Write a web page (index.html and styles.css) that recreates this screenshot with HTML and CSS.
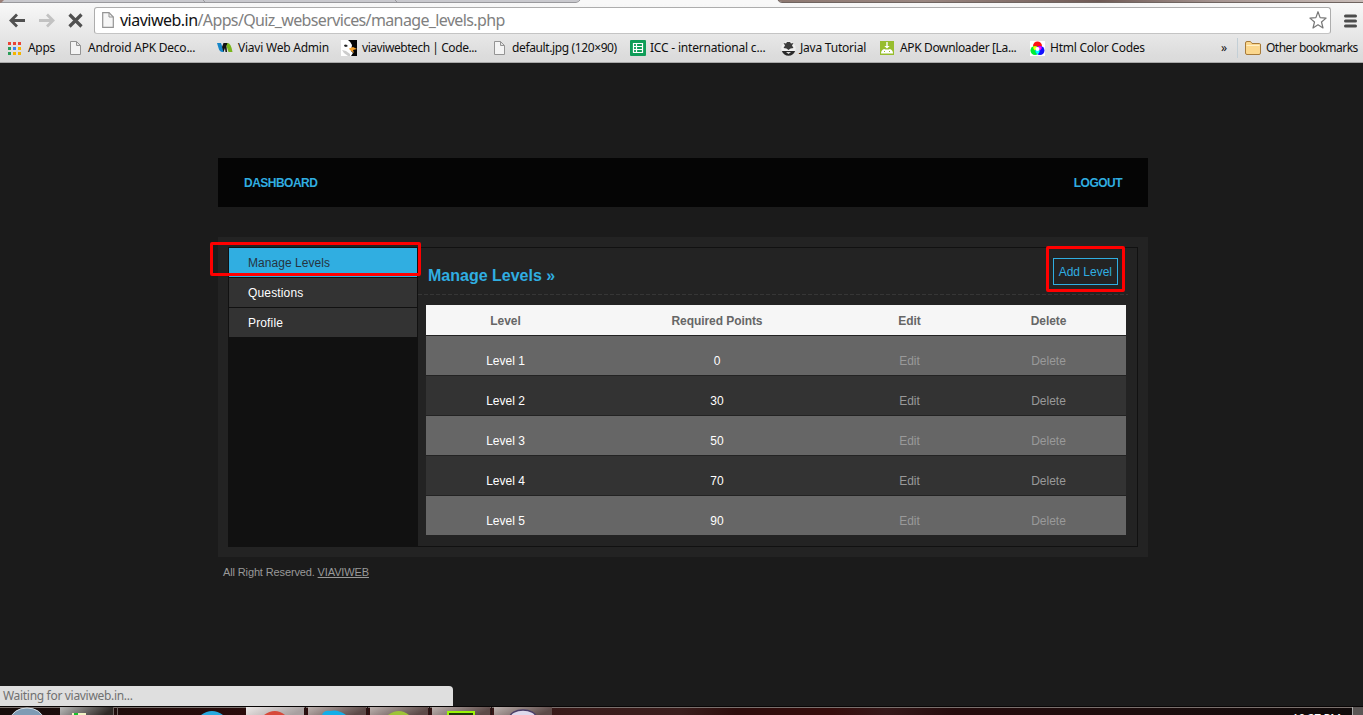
FILE: index.html
```html
<!DOCTYPE html>
<html lang="en">
<head>
<meta charset="utf-8">
<title>Manage Levels</title>
<link rel="stylesheet" href="styles.css">
</head>
<body>
<div class="screen">
  <header class="chrome">
    <svg class="tabs" width="1363" height="4" viewBox="0 0 1363 4">
      <defs><linearGradient id="glass"><stop offset="0" stop-color="#8d7871"/><stop offset=".25" stop-color="#998680"/><stop offset=".55" stop-color="#6f5a55"/><stop offset=".75" stop-color="#a59490"/><stop offset="1" stop-color="#c9bdb9"/></linearGradient></defs>
      <rect width="1363" height="4" fill="#f8f8f8"/>
      <path d="M0 0H580Q579 2 576 2H0Z" fill="#c9c9ce"/><path d="M0 2.5H576Q579 2 580 0M203 0l2 2M395 0l2 2" fill="none" stroke="#99999d"/>
      <path d="M778 0H1363V2H782Q779 2 778 0Z" fill="url(#glass)"/><path d="M778 0Q779 2.500 782 2.500H1363" fill="none" stroke="#6f6460"/>
      <path d="M0 0H4L1 3H0Z" fill="#9b8079"/>
    </svg>
    <div class="toolbar">
      <svg class="nav" width="94" height="28" viewBox="0 0 94 28">
        <g fill="none" stroke-width="2.8">
          <path d="M25 13.500H12M17 7.500l-6 6 6 6" stroke="#505050"/>
          <path d="M39 13.500H52M47 7.500l6 6-6 6" stroke="#c2c2c2"/>
          <path d="M69.500 7.500l12 12M81.500 7.500l-12 12" stroke="#505050" stroke-width="3.200"/>
        </g>
      </svg>
      <div class="address">
        <svg width="12" height="16" viewBox="0 0 12 16"><path d="M.7.700H7L11.300 5V15.300H.7Z" fill="#f6f6f6" stroke="#949494" stroke-width="1.200"/><path d="M7 .700V5h4.300" fill="none" stroke="#949494"/></svg>
        <span class="url"><b>viaviweb.in</b>/Apps/Quiz_webservices/manage_levels.php</span>
        <svg width="20" height="20" viewBox="0 0 20 20"><path d="M10 1.700l2.100 5.900 6 .5-4.600 3.900 1.500 6L10 14.800l-5 3.200 1.500-6-4.600-3.900 6-.5Z" fill="#fff" stroke="#777" stroke-width="1.200" stroke-linejoin="round"/></svg>
      </div>
      <svg class="menu" width="13" height="14" viewBox="0 0 13 14"><path d="M1.500 2h10M1.500 7h10M1.500 12h10" stroke="#4c4c4c" stroke-width="3" stroke-linecap="round"/></svg>
    </div>
    <nav class="bookmarks">
      <a class="bm apps"><svg width="13" height="13" viewBox="0 0 13 13"><path d="M0 0h3v3H0zM5 0h3v3H5zM10 0h3v3h-3z" fill="#ea4335"/><path d="M0 5h3v3H0zM0 10h3v3H0z" fill="#2b9d58"/><path d="M5 5h3v3H5z" fill="#3b82ee"/><path d="M10 5h3v3h-3zM5 10h3v3H5zM10 10h3v3h-3z" fill="#f4b400"/></svg><span>Apps</span></a>
      <a class="bm deco"><svg width="11" height="14" viewBox="0 0 11 14"><path d="M.5.500H6.500L10.500 4.500V13.500H.5ZM6.500.500V4.500H10.500" fill="#f4f4f4" stroke="#949494"/></svg><span>Android APK Deco...</span></a>
      <a class="bm viavi"><svg width="16" height="10" viewBox="0 0 16 10"><path d="M0 0h4l3 9H5.500Q2.500 9 1.500 5Z" fill="#1686c8"/><path d="M5 4L6.500 0H11L9.500 3 10 9H8.500L8 5 6.500 9Z" fill="#111"/><path d="M10.500 0q3.500 0 5 9h-4L9.500 3Z" fill="#79b51c"/></svg><span>Viavi Web Admin</span></a>
      <a class="bm tech"><svg width="16" height="16" viewBox="0 0 16 16"><rect width="16" height="16" fill="#fff"/><path d="M7 0h9v16h-6l2-3-2-2 1-6Q10 2 7 0Z" fill="#050505"/><path d="M3 5l2-.500 2 1.500-2 1-1.500-.500Z" fill="#222"/><path d="M1 10l4 1 4 3v2H7L3 13Z" fill="#ccc"/><path d="M8 8.500l4-1.500 4 2-4 1 1 3-4-3Z" fill="#f5a02a"/></svg><span>viaviwebtech | Code...</span></a>
      <a class="bm jpg"><svg width="11" height="14" viewBox="0 0 11 14"><path d="M.5.500H6.500L10.500 4.500V13.500H.5ZM6.500.500V4.500H10.500" fill="#f4f4f4" stroke="#949494"/></svg><span>default.jpg (120×90)</span></a>
      <a class="bm icc"><svg width="16" height="16" viewBox="0 0 16 16"><rect width="16" height="16" rx="1" fill="#0f9d58"/><path d="M3.500 3.500h9v9h-9zM3.500 6.500h9M3.500 9.500h9M6.500 3.500v9" fill="none" stroke="#fff" stroke-width="1.200"/></svg><span>ICC - international c...</span></a>
      <a class="bm java"><svg width="15" height="15" viewBox="0 0 15 15"><circle cx="7.500" cy="7.500" r="7.200" fill="#f1f1f1"/><path d="M.8 10h13.400q-2 4.800-6.700 4.800T.8 10Z" fill="#292929"/><path d="M6 1h3l1 1.500 2.500-.500L11 4.500 12.500 7l-3 .500L7.500 9l-2-1.500-3-.500L4 4.500 2.500 2 5 2.500Z" fill="#3c3c3c"/><path d="M5 11h5l-2.500 2Z" fill="#ddd"/></svg><span>Java Tutorial</span></a>
      <a class="bm apk"><svg width="14" height="14" viewBox="0 0 14 14"><rect width="14" height="14" fill="#97bd2e"/><path d="M6.300 1h1.400v4h2L7 7.500 4.300 5h2ZM1 12.500q0-3.500 3-4.500l1.500.500h3L10 8q3 1 3 4.500Z" fill="#fff"/><path d="M4 10.500h1M9 10.500h1" stroke="#97bd2e"/></svg><span>APK Downloader [La...</span></a>
      <a class="bm color"><svg width="15" height="15" viewBox="0 0 15 15"><rect width="15" height="15" fill="#fff"/><circle cx="7.500" cy="5" r="4.500" fill="#f11"/><circle cx="5" cy="9.500" r="4.500" fill="#0e3"/><circle cx="10" cy="9.500" r="4.500" fill="#11f"/><path d="M3.200 5.600Q6 4.500 7.500 6L5 9.400Q3 8.500 3.200 5.600Z" fill="#ff0"/><path d="M11.800 5.600Q9 4.500 7.500 6l2.500 3.400q2-.9 1.800-3.800Z" fill="#f0f"/><path d="M5.500 9h4q.5 3-2 4.300Q5 12 5.500 9Z" fill="#0ff"/><circle cx="7.500" cy="8" r="2" fill="#fff"/></svg><span>Html Color Codes</span></a>
      <a class="bm more"><span>»</span></a>
      <a class="bm other"><svg width="16" height="14" viewBox="0 0 16 14"><path d="M.5 12V2Q.5.500 2 .500H5.500L7 2.500H14.500Q15.500 2.500 15.500 4V12Q15.500 13.500 14 13.500H2Q.5 13.500.5 12Z" fill="#fbd78d" stroke="#a77b3a"/><path d="M1.500 4.500h13" stroke="#fff0c8"/></svg><span>Other bookmarks</span></a>
    </nav>
  </header>

  <main class="page">
    <div class="topnav"><a>DASHBOARD</a><a>LOGOUT</a></div>
    <div class="panel">
      <div class="inner">
        <ul class="side"><li class="active">Manage Levels</li><li>Questions</li><li>Profile</li></ul>
        <section class="content">
          <div class="heading"><h1>Manage Levels »</h1><a class="add">Add Level</a></div>
          <svg class="dash" width="710" height="1" viewBox="0 0 710 1"><path d="M0 .500H710" stroke="#363636" stroke-dasharray="4 2"/></svg>
          <div class="table">
            <div class="row head"><span>Level</span><span>Required Points</span><span>Edit</span><span>Delete</span></div>
            <div class="row odd"><span>Level 1</span><span>0</span><a>Edit</a><a>Delete</a></div>
            <div class="row"><span>Level 2</span><span>30</span><a>Edit</a><a>Delete</a></div>
            <div class="row odd"><span>Level 3</span><span>50</span><a>Edit</a><a>Delete</a></div>
            <div class="row"><span>Level 4</span><span>70</span><a>Edit</a><a>Delete</a></div>
            <div class="row odd"><span>Level 5</span><span>90</span><a>Edit</a><a>Delete</a></div>
          </div>
        </section>
      </div>
    </div>
    <p class="foot">All Right Reserved. <u>VIAVIWEB</u></p>
  </main>

  <div class="status"><span>Waiting for viaviweb.in...</span></div>
  <footer class="taskbar">
    <svg width="1363" height="9" viewBox="0 0 1363 9">
      <defs>
        <linearGradient id="bar"><stop offset="0" stop-color="#170d0c"/><stop offset=".2" stop-color="#2b0b0a"/><stop offset=".43" stop-color="#3a1b1a"/><stop offset=".5" stop-color="#3a1d1c"/><stop offset=".54" stop-color="#2d0c0b"/><stop offset=".61" stop-color="#360c0b"/><stop offset=".65" stop-color="#351819"/><stop offset=".7" stop-color="#250b0c"/><stop offset=".85" stop-color="#1b0c0c"/><stop offset="1" stop-color="#100a0a"/></linearGradient>
        <linearGradient id="btn" x2="1" y2=".3"><stop offset="0" stop-color="#bdb2af"/><stop offset="1" stop-color="#5d4a48"/></linearGradient>
        <linearGradient id="lit" x2="1" y2=".3"><stop offset="0" stop-color="#ece8e7"/><stop offset="1" stop-color="#a8a0a0"/></linearGradient>
        <linearGradient id="dark" x2="1" y2=".2"><stop offset="0" stop-color="#b9b9b9"/><stop offset="1" stop-color="#2e2825"/></linearGradient>
      </defs>
      <rect width="1363" height="9" fill="url(#bar)"/><rect width="1363" height="1" fill="#080505"/><rect y="1" width="1363" height="1" fill="#7a706d"/>
      <ellipse cx="27" cy="13" rx="16" ry="11" fill="#7e9bb4" stroke="#d5e0e8"/>
      <rect x="60" y="1" width="53" height="8" fill="url(#dark)"/><path d="M113.500 1v8M117.500 1v8" stroke="#6e6360"/><path d="M72 7h14v2H72Z" fill="#f1f3c4"/><path d="M74 7h4v2h-4Z" fill="#19c22c"/>
      <path d="M201 9q11-8 22 0Z" fill="#27a9df"/>
      <rect x="246" y="1" width="58" height="8" fill="url(#lit)"/><path d="M264 9q11-8 21 0Z" fill="#d7493a"/>
      <rect x="308" y="1" width="58" height="8" fill="url(#btn)"/><path d="M322 9q2-5 8-4 8-2 16 4Z" fill="#13aee8"/>
      <rect x="370" y="1" width="58" height="8" fill="url(#btn)"/><path d="M388 9q11-8 21 0Z" fill="#9dc437"/>
      <rect x="432" y="1" width="58" height="8" fill="url(#btn)"/><path d="M448 9V6h26v3" fill="#20380c" stroke="#9cf408" stroke-width="2"/>
      <rect x="494" y="1" width="58" height="8" fill="url(#btn)"/><ellipse cx="523" cy="11" rx="13" ry="7" fill="#ded9ec" stroke="#493c66" stroke-width="1.500"/>
      <path d="M305.500 1v8M367.500 1v8M429.500 1v8M491.500 1v8" stroke="#231515"/>
      <rect x="1352" y="1" width="11" height="8" fill="#5b5655"/><path d="M1352.500 1v8" stroke="#aaa"/>
    </svg>
    <span class="clock">10:27 PM</span>
  </footer>

  <div class="mark mark-side"></div>
  <div class="mark mark-add"></div>
</div>
</body>
</html>
```
FILE: styles.css
```css
* { box-sizing: border-box; }
body { margin: 0; background: #1b1b1b; font-family: "Liberation Sans", Arial, sans-serif; font-size: 12px; overflow: hidden; }
svg { display: block; flex: none; }
.screen { position: relative; width: 1363px; height: 715px; display: flex; flex-direction: column; overflow: hidden; }

/* browser toolbar */
.chrome { height: 63px; flex: none; background: linear-gradient(#f8f8f8 3px, #dcdcdc 56px, #dadada); border-bottom: 1px solid #a9a9a9; font-family: "Noto Sans", "Open Sans", sans-serif; }
.toolbar { display: flex; align-items: center; height: 32px; padding-top: 1px; }
.address { width: 1237px; height: 27px; display: flex; align-items: center; background: #fff; border: 1px solid #adadad; border-bottom-color: #c4c4c4; border-radius: 3px; padding: 0 2px 1px 7px; }
.url { flex: 1; margin-left: 6px; font-size: 16px; line-height: 20px; color: #808080; white-space: nowrap; letter-spacing: -.63px; }
.url b { font-weight: 400; color: #111; letter-spacing: -.52px; }
.menu { margin-left: 13px; }
.bookmarks { display: flex; align-items: center; height: 24px; padding-left: 8px; color: #101010; }
.bm { display: flex; align-items: center; flex: none; white-space: nowrap; line-height: 16px; font-size: 12px; letter-spacing: -.3px; }
.bm svg { margin-right: 5px; }
.apps { width: 62px; } .apps svg { margin-right: 7px; }
.deco { width: 147px; letter-spacing: -.23px; } .deco svg { margin-right: 7px; }
.viavi { width: 124px; letter-spacing: -.23px; }
.tech { width: 153px; letter-spacing: -.44px; }
.jpg { width: 136px; letter-spacing: -.38px; } .jpg svg { margin-right: 7px; }
.icc { width: 151px; letter-spacing: -.2px; } .icc svg { margin-right: 4px; }
.java { width: 99px; letter-spacing: -.22px; } .java svg { margin-right: 4px; }
.apk { width: 150px; letter-spacing: -.36px; } .apk svg { margin-right: 6px; }
.color { width: 191px; letter-spacing: -.24px; }
.more { width: 16px; }
.other { padding-left: 7px; border-left: 1px solid #c3cfd6; height: 20px; letter-spacing: -.5px; }

/* admin page */
.page { width: 930px; margin: 95px 0 0 218px; }
.topnav { height: 49px; display: flex; justify-content: space-between; align-items: center; padding: 0 26px; background: #050505; color: #30aee1; font-weight: 700; letter-spacing: -.52px; }
.panel { height: 320px; margin-top: 30px; padding: 10px; background: #232323; }
.inner { height: 300px; display: flex; border: 1px solid #111; }
.side { width: 189px; margin: 0; padding: 0; list-style: none; background: #111; border-right: 1px solid #111; }
.side li { height: 29px; line-height: 16px; margin-bottom: 1px; padding: 7px 0 0 19px; background: #333; color: #fff; letter-spacing: .15px; }
.side .active { background: #30aee1; color: #263340; letter-spacing: .05px; }
.content { width: 710px; }
.heading { height: 46px; display: flex; justify-content: space-between; padding: 10px 10px 0; }
h1 { margin: 8px 0 0; font-size: 16px; line-height: 20px; color: #30aee1; }
.add { height: 27px; line-height: 16px; padding: 5px 5px 0; border: 1px solid #30aee1; color: #30aee1; }
.table { width: 700px; margin: 10px 0 0 8px; }
.row { display: grid; grid-template-columns: 159px 264px 121px 157px; height: 39px; line-height: 16px; padding-top: 17px; margin-bottom: 1px; background: #333; color: #fff; text-align: center; }
.row a { color: #999; }
.odd { background: #666; }
.head { height: 30px; padding-top: 8px; background: #f6f6f6; color: #666; font-weight: 700; letter-spacing: -.07px; }
.foot { margin: 8px 0 0 5px; font-size: 11px; line-height: 14px; color: #999; letter-spacing: -.13px; }

/* overlays at the screen's lower edge */
.status { position: absolute; left: 0; top: 686px; width: 453px; height: 20px; padding-left: 3px; background: #dfdfdf; border-radius: 0 4px 0 0; color: #707070; font: 12px/20px "Noto Sans", sans-serif; letter-spacing: -.31px; }
.taskbar { position: absolute; left: 0; top: 706px; width: 1363px; height: 9px; overflow: hidden; }
.clock { position: absolute; left: 1292px; top: 5px; color: #fff; font: 12px/16px "Noto Sans", sans-serif; letter-spacing: -.4px; white-space: nowrap; }
.mark { position: absolute; border: 3px solid #f00; border-radius: 2px; }
.mark-side { left: 210px; top: 242px; width: 211px; height: 34px; }
.mark-add { left: 1046px; top: 246px; width: 79px; height: 46px; }
```
